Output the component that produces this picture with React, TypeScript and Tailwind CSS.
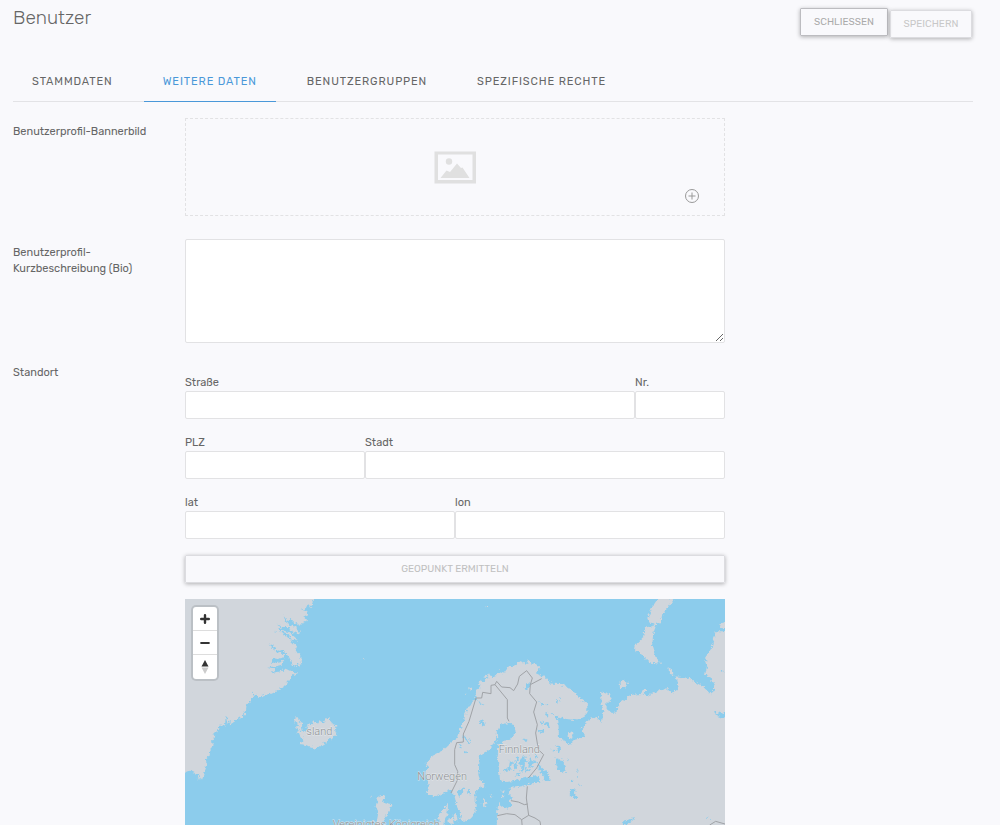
import type { ReactNode } from "react";

const tabs = ["Stammdaten", "Weitere Daten", "Benutzergruppen", "Spezifische Rechte"];

const buttonStyle =
  "h-7 rounded-[1px] border px-3 pb-px text-[10px] leading-4 uppercase shadow-[0_1px_4px_rgba(0,0,0,0.3)]";
const inputStyle = "h-7 w-full rounded-[2px] border border-[#e2e2e4] bg-white px-2 text-xs outline-none";

function Row({ label, htmlFor, children }: { label: string; htmlFor?: string; children: ReactNode }) {
  return (
    <div className="grid grid-cols-[172px_minmax(0,540px)]">
      <label htmlFor={htmlFor} className="max-w-[150px] pt-[6px] text-[11px] leading-4">
        {label}
      </label>
      <div>{children}</div>
    </div>
  );
}

function Field({ id, label, className }: { id: string; label: string; className: string }) {
  return (
    <div className={className}>
      <label htmlFor={id} className="block text-[11px] leading-4">
        {label}
      </label>
      <input id={id} type="text" className={inputStyle} />
    </div>
  );
}

function NorthernEuropeMap() {
  return (
    <svg viewBox="0 3 1620 678" preserveAspectRatio="xMidYMin slice" className="block h-[226px] w-full bg-[#8cccec]">
      <defs>
        <filter id="coast" x="-5%" y="-5%" width="110%" height="110%">
          <feTurbulence type="fractalNoise" baseFrequency="0.11" numOctaves="3" seed="4" result="noise" />
          <feDisplacementMap in="SourceGraphic" in2="noise" scale="16" xChannelSelector="R" yChannelSelector="G" />
        </filter>
      </defs>
      <g filter="url(#coast)">
        <g fill="#d1d6dc">
          {/* Greenland */}
          <path d="M-20-20H400L382 12 380 28 366 20 360 32 350 36 366 42 372 50 355 56 366 68 345 80 328 73 318 62 308 70 294 52 306 78 330 86 343 100 345 110 322 100 300 84 290 90 272 74 290 96 312 103 330 118 342 132 320 124 306 106 290 102 268 98 300 110 318 128 336 145 330 162 345 166 349 206 340 192 335 207 320 203 314 180 304 168 290 156 274 160 262 142 253 136 262 152 277 163 296 166 299 178 278 183 262 180 260 194 278 192 298 188 290 200 268 206 249 207 272 213 260 226 288 219 305 212 325 222 341 224 325 232 310 248 300 262 280 277 260 287 240 290 222 297 210 290 203 277 207 298 195 308 185 322 182 345 170 357 150 370 133 382 138 368 125 378 131 360 122 358 120 382 102 384 97 400 85 405 89 418 78 432 86 445 76 455 73 475 62 485 67 500 58 510 60 522 51 545 44 533 38 549 40 530 28 528 22 515 0 524-20 524Z" />
          {/* Iceland */}
          <path d="M330 359 340 358 341 370 352 376 347 384 351 402 362 400 366 383 372 378 377 383 385 370 390 377 399 372 400 380 408 368 416 374 424 357 432 366 440 366 444 381 457 384 451 397 455 407 438 422 415 437 392 452 375 447 362 440 342 438 355 424 348 412 335 404 347 397 330 386 342 383 338 374 328 372Z" />
          {/* Scandinavia and Russia */}
          <path d="M722 586 750 598 775 585 795 575 803 582 810 600 815 625 828 650 825 668 840 672 860 660 872 640 872 600 870 580 900 560 885 545 880 530 885 470 905 460 925 440 937 420 935 400 945 380 965 376 985 380 992 400 980 420 960 428 940 440 938 480 942 520 945 545 965 552 990 548 1020 540 1050 532 1063 540 1066 554 1040 556 1010 565 975 570 970 590 985 600 970 610 980 620 970 632 952 625 940 615 936 645 935 700H1640V100H1592L1580 150 1560 180 1567 200 1560 232 1577 240 1590 265 1580 292 1550 262 1510 240 1472 235 1478 270 1460 288 1450 270 1410 282 1395 293 1370 288 1340 290 1300 318 1298 343 1275 345 1260 320 1280 303 1275 290 1248 280 1250 320 1255 340 1250 375 1235 357 1210 365 1190 390 1198 418 1170 425 1155 440 1140 430 1122 420 1120 365 1090 340 1110 352 1140 362 1175 367 1198 355 1208 335 1205 315 1185 300 1160 275 1130 258 1100 257 1080 238 1052 226 1067 210 1048 194 1040 202 1030 184 1022 200 1008 190 990 202 970 207 958 224 944 220 930 236 912 232 902 246 888 250 884 270 872 280 875 303 862 308 850 328 840 348 838 365 825 395 818 420 800 430 785 445 765 463 740 475 720 500 735 508 718 520 730 550 732 572Z" />
          {/* Novaya Zemlya */}
          <path d="M1423-5 1400 30 1386 65 1410 82 1379 89 1374 118 1352 140 1350 160 1370 170 1395 194 1429 197 1412 178 1401 145 1405 105 1414 80 1428 72 1432 50 1450 26 1468 3Z" />
          <path d="M1304 252 1318 245 1329 256 1320 270 1305 270ZM1448 208 1458 212 1470 234 1455 227ZM1607 77 1625 72V92L1605 90ZM1370 276 1380 270 1380 286 1370 291ZM1148 402 1162 404 1162 417 1154 423 1148 416Z" />
          {/* Britain and Denmark */}
          <path d="M570 700 579 650 572 625 580 596 602 592 594 612 619 618 612 645 600 658 592 672 592 700ZM760 655 776 632 789 617 788 645 780 662 778 690 762 690ZM790 662 804 658 806 678 792 676ZM806 652 815 650 818 670 808 668Z" />
          <path d="M895 602 905 614 898 628 893 622ZM918 585 922 595 917 602ZM949 575 960 578 955 584ZM950 594 960 593 955 601ZM532 181H537V184H532ZM905 23H910V28H905ZM852 268 860 270 855 276ZM875 258 890 248 885 262ZM895 238 912 226 903 240ZM837 292 842 290 842 297ZM554 600 561 592 558 602Z" />
        </g>
        <g fill="#8cccec">
          <path d="M1018 270 1032 254 1036 260 1028 275ZM876 308 900 322 888 320ZM881 366 895 368 900 382 889 381ZM830 412 850 424 862 441 846 434ZM838 455 846 458 845 470 838 466ZM821 440 831 446 826 450ZM1010 418 1030 428 1022 432ZM1062 310 1078 318 1070 324ZM1064 368 1080 374 1070 380ZM1060 395 1078 400 1068 408ZM816 580 838 568 832 590 822 596ZM845 582 854 570 856 590ZM1080 515 1098 538 1090 549 1076 548ZM1054 490 1072 510 1084 520 1082 542 1066 522Z" />
          <path d="M975 487 984 492 975 515 960 520 955 516 972 508ZM1000 475 1005 480 994 492 996 506 988 518 986 498ZM1015 470 1020 485 1032 488 1020 495 1018 510 1006 524 1010 502 1002 496ZM1036 474 1044 490 1054 492 1038 500 1045 512 1030 506ZM1050 462 1057 476 1050 485ZM998 522 1008 528 990 538ZM1024 510 1036 517 1018 526Z" />
          <path d="M1098 455 1113 456 1107 461ZM1114 440 1126 446 1128 455 1120 468 1118 454ZM1112 480 1125 484 1136 486 1133 496 1142 504 1143 515 1135 526 1120 516 1114 500ZM1154 544 1166 547 1158 551ZM1156 573 1172 575 1170 588 1178 598 1172 604 1153 588ZM1174 510 1178 520 1174 522ZM1176 533 1182 540 1176 540ZM1181 555 1190 565 1184 562ZM1148 484 1151 488 1147 490ZM1114 306 1119 306 1117 318 1113 314ZM1122 298 1128 300 1124 308ZM1311 677 1316 668 1352 660 1340 668 1325 680ZM1564 659H1571V663H1564ZM1587 342 1600 347 1606 342 1640 350V359L1610 358 1592 354ZM1604 218 1614 216 1616 223 1607 224Z" />
          <path d="M1350 160 1366 163 1379 176 1370 178 1385 186 1375 180ZM1082 372 1095 374 1092 388 1080 378ZM1080 320 1090 318 1085 325ZM1080 344 1088 342 1090 356 1082 352Z" />
        </g>
      </g>
      <g fill="none" stroke="#a0a3a7" strokeWidth="3" strokeLinejoin="round">
        <path d="M798 585 818 545V520L809 500V455L815 434 835 432V408L852 370 873 300 890 300 893 283 918 287V262L930 260 967 305V360L972 370" />
        <path d="M930 260 935 250 950 267 975 269 986 278 998 258 1003 235 1025 218 1042 240 1036 260 1034 287 1055 312 1046 342 1057 380 1052 405 1060 455 1076 470 1055 510 1030 540" />
        <path d="M1036 260 1070 242M1027 565 1024 600 1028 630 1031 652 1010 665 1012 690M978 608 1000 612 1018 620 1028 618M937 653 965 647 990 650 1010 665M1031 652 1050 660 1065 670 1068 690M1574 681 1592 670 1620 678" />
      </g>
      <g
        fill="#8a8e91"
        stroke="#eceef0"
        strokeWidth="3"
        strokeOpacity="0.8"
        paintOrder="stroke"
        fontSize="33"
        fontFamily="Roboto, sans-serif"
        fontWeight="300"
      >
        <text x="364" y="411">sland</text>
        <text x="697" y="546">Norwegen</text>
        <text x="941" y="466">Finnland</text>
        <text x="443" y="691">Vereinigtes Königreich</text>
      </g>
    </svg>
  );
}

function MapControls() {
  const button = "flex h-6 w-6 items-center justify-center";
  return (
    <div className="absolute top-2 left-2 divide-y divide-[#ddd] rounded-[3px] bg-white shadow-[0_0_0_2px_rgba(0,0,0,0.1)]">
      <button type="button" aria-label="Vergrößern" className={button}>
        <svg viewBox="0 0 10 10" className="size-[10px]" fill="none" stroke="#333" strokeWidth="2.4" strokeLinecap="round">
          <path d="M5 1.2V8.8M1.2 5H8.8" />
        </svg>
      </button>
      <button type="button" aria-label="Verkleinern" className={button}>
        <svg viewBox="0 0 10 10" className="size-[10px]" fill="none" stroke="#333" strokeWidth="2.2" strokeLinecap="round">
          <path d="M1.2 5H8.8" />
        </svg>
      </button>
      <button type="button" aria-label="Nach Norden ausrichten" className={button}>
        <svg viewBox="0 0 8 14" className="h-[14px] w-2">
          <path d="M4 0 7.500 6.500H0.500Z" fill="#333" />
          <path d="M0.500 7.500H7.500L4 14Z" fill="#ccc" />
        </svg>
      </button>
    </div>
  );
}

export default function App() {
  return (
    <div className="min-h-screen bg-[#f9f9fc] pr-[27px] pl-[13px] font-['Rubik','Roboto',sans-serif] text-[#666]">
      <header className="flex h-[62px] items-start justify-between pt-1">
        <h1 className="text-[19px] leading-7 font-light">Benutzer</h1>
        <div className="flex items-start gap-[2px] pt-1">
          <button type="button" className={`${buttonStyle} min-w-[88px] border-[#bcbcc0] text-[#aaa]`}>
            Schliessen
          </button>
          <button type="button" disabled className={`${buttonStyle} mt-[2px] mr-px min-w-[82px] border-[#dcdce0] text-[#c8c8c8]`}>
            Speichern
          </button>
        </div>
      </header>

      <nav className="flex h-10 border-b border-[#e3e3e6]">
        {tabs.map((tab) => (
          <a
            key={tab}
            href="#"
            className={`-mb-px flex items-center border-b px-[19px] pt-px text-[11px] tracking-[0.08em] uppercase not-last:mr-3 ${
              tab === "Weitere Daten" ? "border-[#4a98d9] text-[#4a98d9]" : "border-transparent"
            }`}
          >
            {tab}
          </a>
        ))}
      </nav>

      <main className="pt-4">
        <Row label="Benutzerprofil-Bannerbild" htmlFor="banner">
          <div className="relative flex h-[98px] items-center justify-center border border-dashed border-[#e2e2e4]">
            <svg viewBox="0 0 42 33" className="h-[33px] w-[42px]" fill="#e0e0e0">
              <path fillRule="evenodd" d="M0.500 0.500H42V32.500H0.500ZM4 3.500V29H38.500V3.500Z" />
              <circle cx="15" cy="10.500" r="3.200" />
              <path d="M6.500 27 12.500 19.500 16 21 23 12.500 27 17 28.500 16.500 35.500 27Z" />
            </svg>
            <button id="banner" type="button" aria-label="Bild hinzufügen" className="absolute right-[25px] bottom-3">
              <svg viewBox="0 0 14 14" className="size-[14px]" fill="none" stroke="#999">
                <circle cx="7" cy="7" r="6.500" />
                <path d="M7 3.500V10.500M3.500 7H10.500" />
              </svg>
            </button>
          </div>
        </Row>

        <div className="mt-[23px]">
          <Row label="Benutzerprofil-Kurzbeschreibung (Bio)" htmlFor="bio">
            <textarea
              id="bio"
              className="block h-[104px] w-full resize rounded-[2px] border border-[#e2e2e4] bg-white p-2 text-xs outline-none"
            />
          </Row>
        </div>

        <div className="mt-4">
          <Row label="Standort">
            <div className="flex flex-col gap-4 pt-4">
              <div className="flex">
                <Field id="street" label="Straße" className="w-5/6" />
                <Field id="number" label="Nr." className="w-1/6" />
              </div>
              <div className="flex">
                <Field id="zip" label="PLZ" className="w-1/3" />
                <Field id="city" label="Stadt" className="w-2/3" />
              </div>
              <div className="flex">
                <Field id="lat" label="lat" className="w-1/2" />
                <Field id="lon" label="lon" className="w-1/2" />
              </div>
            </div>
            <button type="button" disabled className={`${buttonStyle} mt-4 w-full border-[#dcdce0] text-[#c0c0c0]`}>
              Geopunkt ermitteln
            </button>
            <div className="relative mt-4 overflow-hidden">
              <NorthernEuropeMap />
              <MapControls />
            </div>
          </Row>
        </div>
      </main>
    </div>
  );
}
